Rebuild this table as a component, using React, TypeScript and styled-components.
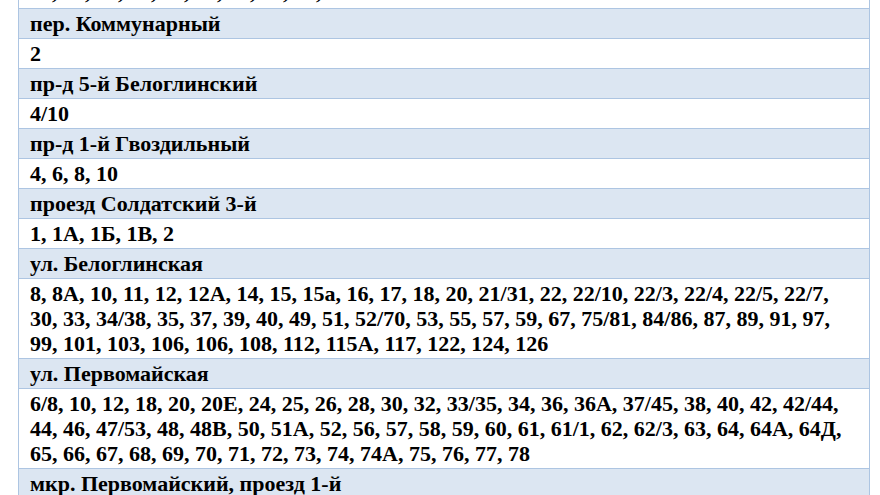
import React from "react";
import styled, { createGlobalStyle } from "styled-components";

const GlobalStyle = createGlobalStyle`
  html, body {
    margin: 0;
    padding: 0;
    background: #ffffff;
  }
`;

type Street = {
  name: string;
  houses: string[];
};

const streets: Street[] = [
  { name: "пер. Коммунарный", houses: ["2"] },
  { name: "пр-д 5-й Белоглинский", houses: ["4/10"] },
  { name: "пр-д 1-й Гвоздильный", houses: ["4, 6, 8, 10"] },
  { name: "проезд Солдатский 3-й", houses: ["1, 1А, 1Б, 1В, 2"] },
  {
    name: "ул. Белоглинская",
    houses: [
      "8, 8А, 10, 11, 12, 12А, 14, 15, 15а, 16, 17, 18, 20, 21/31, 22, 22/10, 22/3, 22/4, 22/5, 22/7,",
      "30, 33, 34/38, 35, 37, 39, 40, 49, 51, 52/70, 53, 55, 57, 59, 67, 75/81, 84/86, 87, 89, 91, 97,",
      "99, 101, 103, 106, 106, 108, 112, 115А, 117, 122, 124, 126",
    ],
  },
  {
    name: "ул. Первомайская",
    houses: [
      "6/8, 10, 12, 18, 20, 20Е, 24, 25, 26, 28, 30, 32, 33/35, 34, 36, 36А, 37/45, 38, 40, 42, 42/44,",
      "44, 46, 47/53, 48, 48В, 50, 51А, 52, 56, 57, 58, 59, 60, 61, 61/1, 62, 62/3, 63, 64, 64А, 64Д,",
      "65, 66, 67, 68, 69, 70, 71, 72, 73, 74, 74А, 75, 76, 77, 78",
    ],
  },
];

const Viewport = styled.div`
  height: 495px;
  overflow: hidden;
  padding-left: 18px;
`;

const Table = styled.table`
  width: 852px;
  margin-top: -22px;
  border-collapse: collapse;
  font-family: "Liberation Serif", "Times New Roman", serif;
  font-weight: 700;
  font-size: 22px;
  line-height: 25px;
  color: #000000;
`;

const Cell = styled.td<{ $head?: boolean; $cut?: boolean }>`
  padding: ${(p) => (p.$cut ? "0 11px 4px 11px" : "2px 11px 2px 11px")};
  border: 1px solid #adc5e2;
  background: ${(p) => (p.$head ? "#dce6f2" : "#ffffff")};
  vertical-align: top;
  text-align: left;
  white-space: nowrap;
`;

const Line = styled.div`
  display: block;
`;

export default function App() {
  return (
    <>
      <GlobalStyle />
      <Viewport>
        <Table>
          <tbody>
            <tr>
              <Cell $cut>79, 81, 83, 85, 87, 89, 91, 93, 95, 97</Cell>
            </tr>
            {streets.map((s) => (
              <React.Fragment key={s.name}>
                <tr>
                  <Cell $head>{s.name}</Cell>
                </tr>
                <tr>
                  <Cell>
                    {s.houses.map((line) => (
                      <Line key={line}>{line}</Line>
                    ))}
                  </Cell>
                </tr>
              </React.Fragment>
            ))}
            <tr>
              <Cell $head>мкр. Первомайский, проезд 1-й</Cell>
            </tr>
          </tbody>
        </Table>
      </Viewport>
    </>
  );
}
